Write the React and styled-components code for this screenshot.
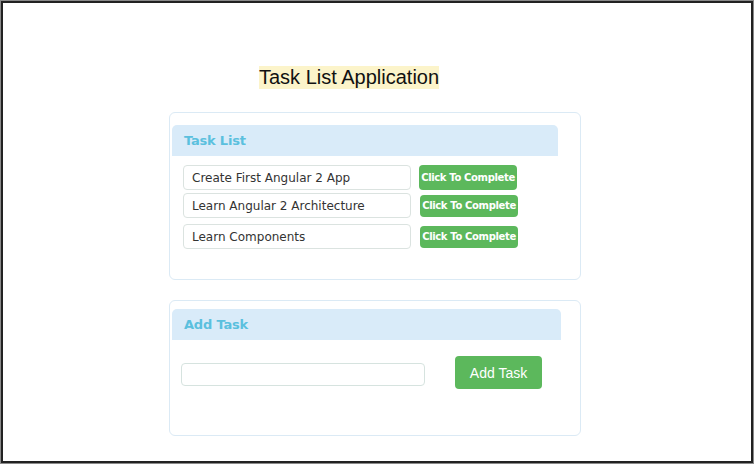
import React from "react";
import styled, { createGlobalStyle } from "styled-components";

const Global = createGlobalStyle`
  html, body { margin: 0; padding: 0; background: #ffffff; }
  * { box-sizing: border-box; }
`;

const Frame = styled.div`
  width: 754px;
  height: 464px;
  border: 1px solid #8a8a8a;
  box-shadow: inset 0 0 0 2px #222222;
  padding: 65px 0 0 168px;
  background: #ffffff;
`;

const Title = styled.h1`
  display: inline-block;
  margin: 0 0 0 90px;
  padding: 0;
  font-family: "Liberation Sans", Arial, sans-serif;
  font-weight: normal;
  font-size: 20px;
  line-height: 23px;
  color: #111111;
  background: #fcf4ca;
`;

const Panel = styled.section`
  width: 412px;
  height: ${(p) => p.$h}px;
  margin-top: ${(p) => p.$mt}px;
  border: 1px solid #dbeaf5;
  border-radius: 6px;
  padding: ${(p) => p.$pt}px 0 0 2px;
`;

const PanelHeader = styled.div`
  width: ${(p) => p.$w}px;
  height: 31px;
  background: #d9ebf9;
  border-radius: 5px 5px 0 0;
  padding-left: 12px;
  font-family: "DejaVu Sans", Verdana, sans-serif;
  font-weight: bold;
  font-size: 13px;
  letter-spacing: -0.2px;
  line-height: 32px;
  color: #5bc0de;
`;

const TaskList = styled.div`
  padding-left: 11px;
  margin-top: 9px;
  display: flex;
  flex-direction: column;
`;

const TaskRow = styled.div`
  display: flex;
  align-items: center;
  margin-top: ${(p) => p.$mt || 0}px;
`;

const TaskInput = styled.input`
  width: 228px;
  height: 25px;
  border: 1px solid #dbe3e0;
  border-radius: 4px;
  padding: 0 0 0 8px;
  margin: 0;
  font-family: "DejaVu Sans", Verdana, sans-serif;
  font-size: 12px;
  color: #333333;
  background: #ffffff;
  outline: none;
`;

const CompleteButton = styled.button`
  width: 98px;
  height: ${(p) => p.$h}px;
  margin-left: ${(p) => p.$ml}px;
  padding: 0;
  border: none;
  border-radius: 4px;
  background: #5cb85c;
  color: #ffffff;
  font-family: "DejaVu Sans", Verdana, sans-serif;
  font-weight: bold;
  font-size: 10px;
  letter-spacing: -0.35px;
  white-space: nowrap;
  cursor: pointer;
`;

const AddRow = styled.div`
  display: flex;
  align-items: flex-start;
  margin-top: 16px;
  padding-left: 9px;
`;

const AddInput = styled.input`
  width: 244px;
  height: 23px;
  margin: 7px 0 0 0;
  border: 1px solid #d6e3df;
  border-radius: 4px;
  padding: 0 8px;
  background: #ffffff;
  outline: none;
`;

const AddButton = styled.button`
  width: 87px;
  height: 33px;
  margin-left: 30px;
  padding: 0;
  border: none;
  border-radius: 4px;
  background: #5cb85c;
  color: #ffffff;
  font-family: "Liberation Sans", Arial, sans-serif;
  font-size: 14px;
  cursor: pointer;
`;

const tasks = [
  { text: "Create First Angular 2 App", mt: 0, h: 25, ml: 8 },
  { text: "Learn Angular 2 Architecture", mt: 3, h: 22, ml: 9 },
  { text: "Learn Components", mt: 6, h: 22, ml: 9 },
];

export default function App() {
  return (
    <>
      <Global />
      <Frame>
        <Title>Task List Application</Title>
        <Panel $h={168} $mt={23} $pt={12}>
          <PanelHeader $w={386}>Task List</PanelHeader>
          <TaskList>
            {tasks.map((t) => (
              <TaskRow key={t.text} $mt={t.mt}>
                <TaskInput readOnly value={t.text} />
                <CompleteButton $h={t.h} $ml={t.ml}>Click To Complete</CompleteButton>
              </TaskRow>
            ))}
          </TaskList>
        </Panel>
        <Panel $h={136} $mt={20} $pt={8}>
          <PanelHeader $w={389}>Add Task</PanelHeader>
          <AddRow>
            <AddInput readOnly value="" />
            <AddButton>Add Task</AddButton>
          </AddRow>
        </Panel>
      </Frame>
    </>
  );
}
